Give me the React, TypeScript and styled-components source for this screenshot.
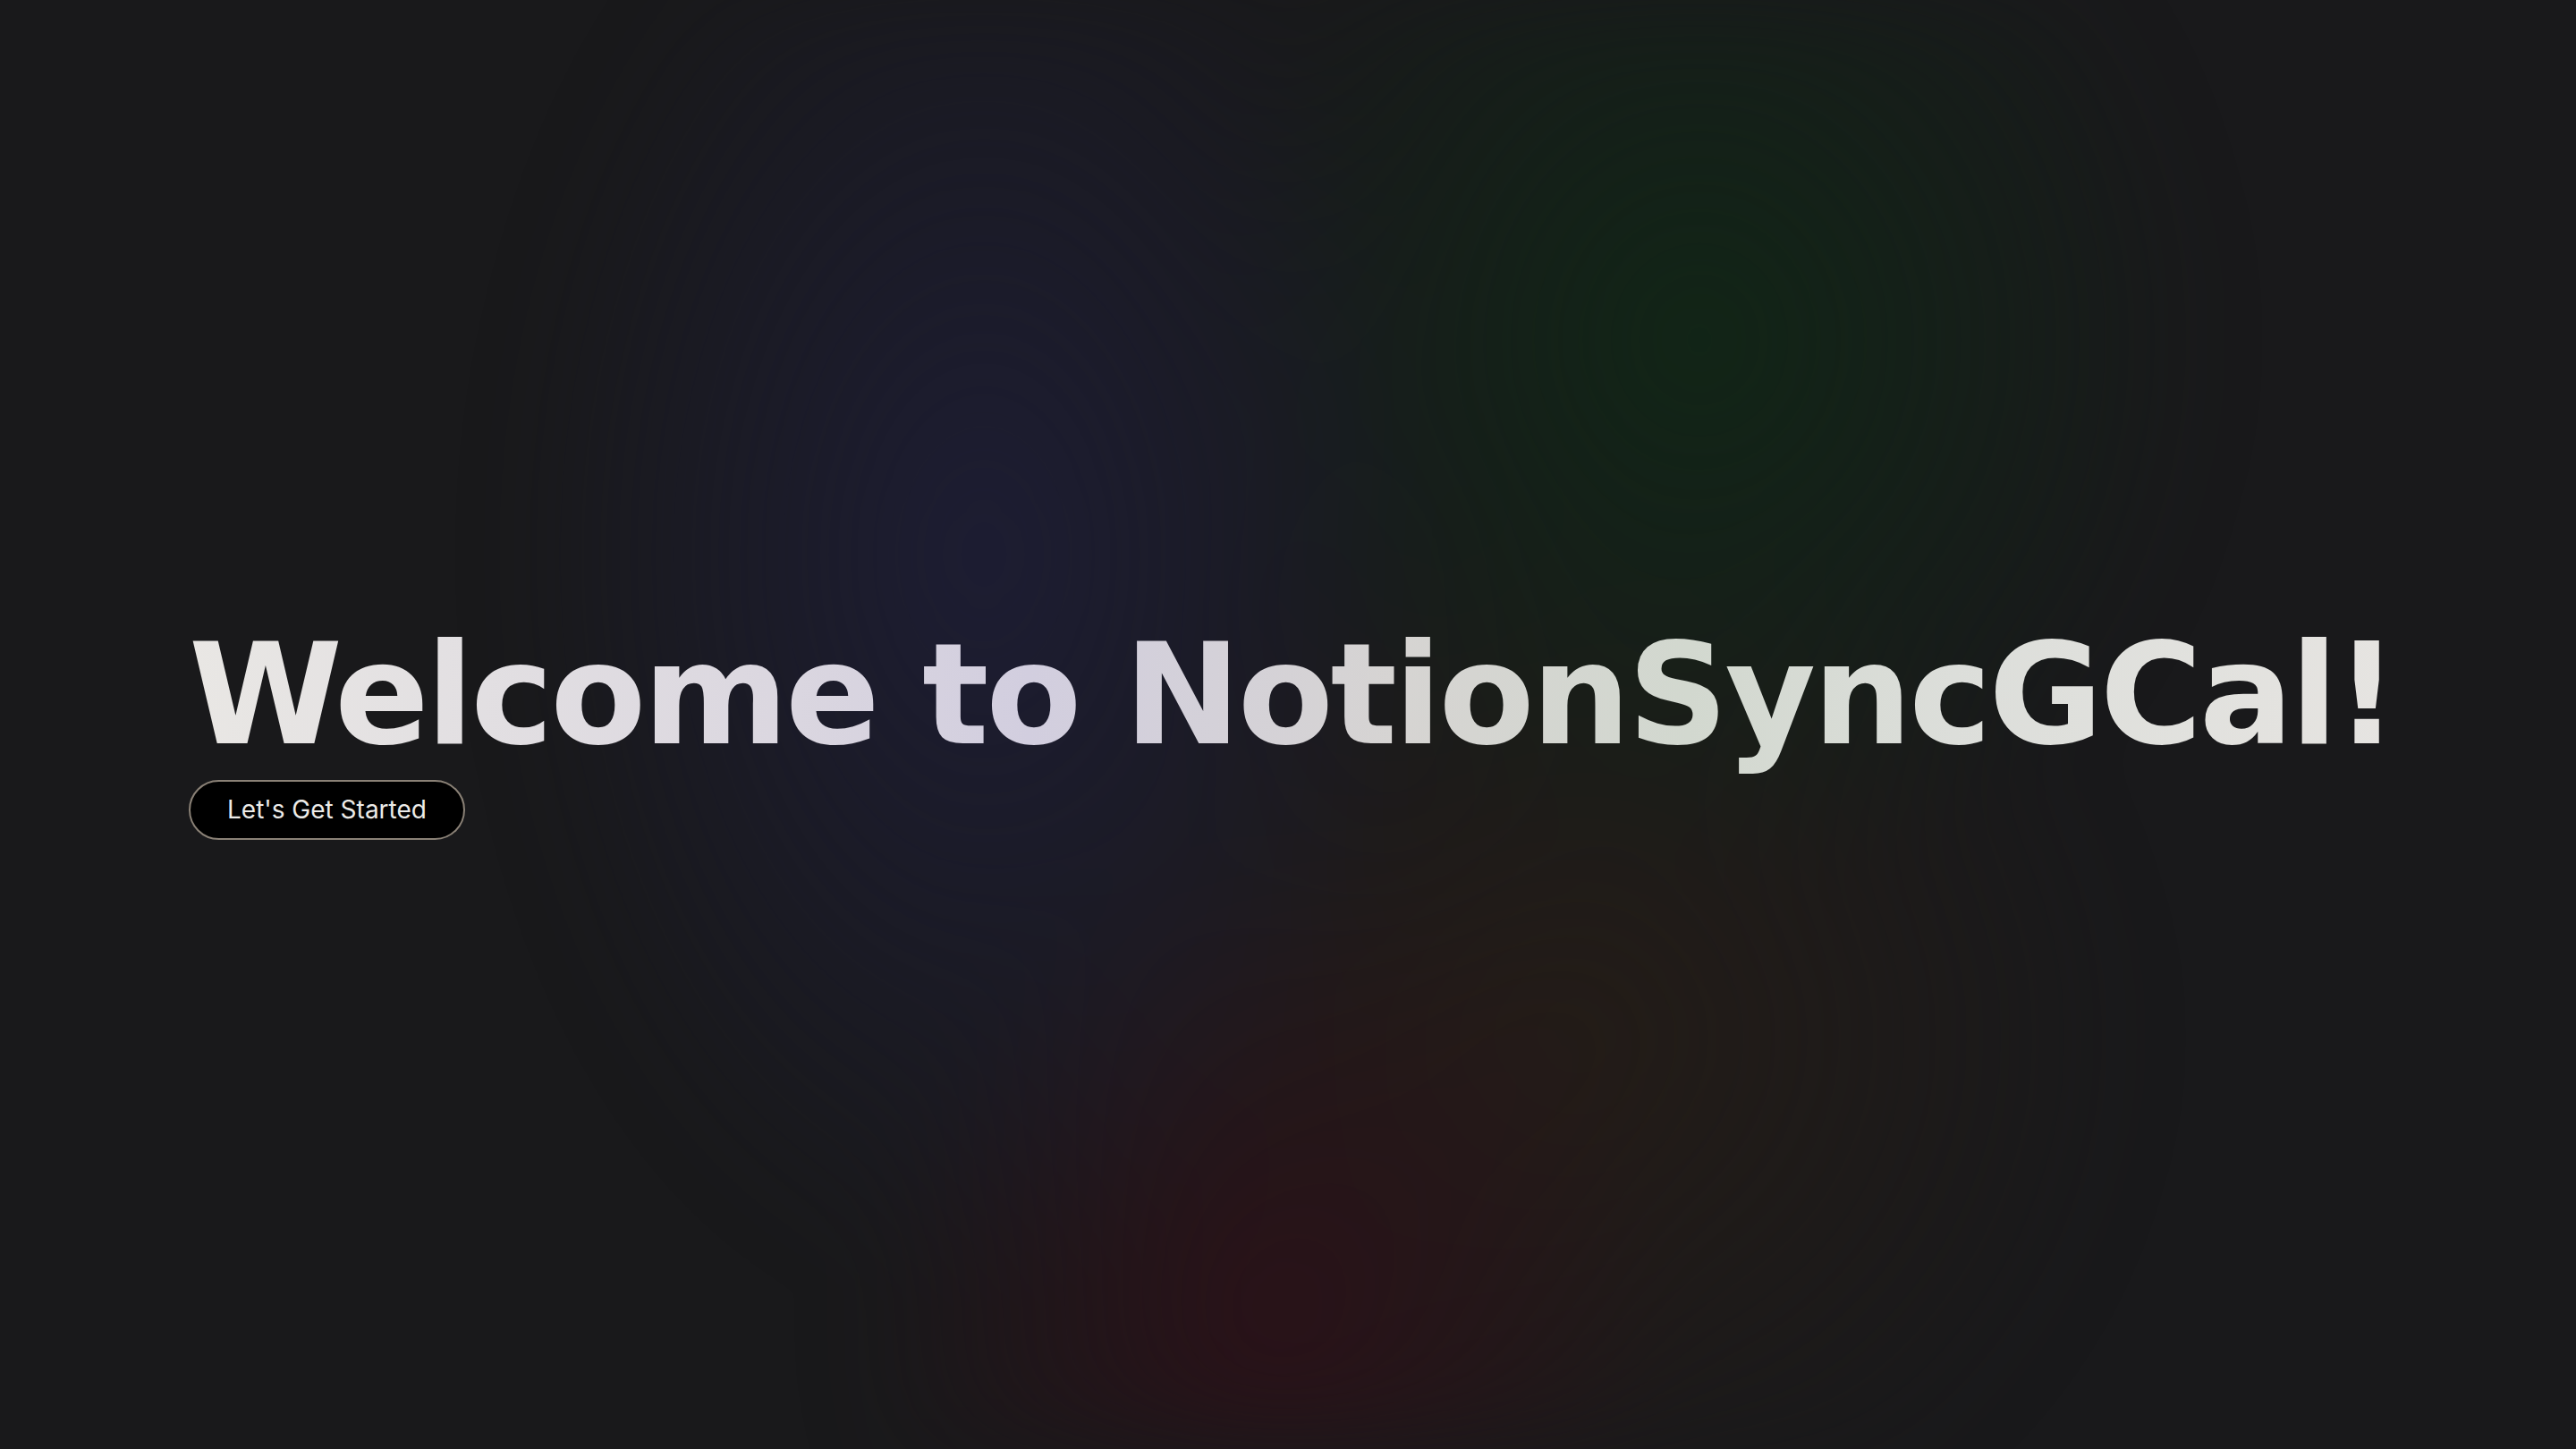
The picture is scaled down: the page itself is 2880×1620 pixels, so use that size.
import React from "react";
import styled, { createGlobalStyle } from "styled-components";

const Global = createGlobalStyle`
  html, body { margin: 0; padding: 0; background: #19191b; }
  body { font-family: "Inter", "Liberation Sans", sans-serif; }
  * { box-sizing: border-box; }
`;

const Page = styled.main`
  position: relative;
  width: 100vw;
  height: 100vh;
  overflow: hidden;
  background: #19191b;
  display: flex;
  flex-direction: column;
  justify-content: center;
  align-items: flex-start;
  padding: 0 0 0 211px;
`;

const Glow = styled.div`
  position: absolute;
  inset: 0;
  pointer-events: none;
  background:
    radial-gradient(ellipse 520px 820px at 1100px 620px, rgba(30, 30, 56, 0.85), rgba(30, 30, 56, 0) 100%),
    radial-gradient(ellipse 560px 620px at 1900px 380px, rgba(16, 40, 22, 0.85), rgba(16, 40, 22, 0) 100%),
    radial-gradient(ellipse 460px 520px at 1420px 1480px, rgba(46, 16, 24, 0.8), rgba(46, 16, 24, 0) 100%),
    radial-gradient(ellipse 620px 600px at 1760px 1160px, rgba(40, 30, 22, 0.7), rgba(40, 30, 22, 0) 100%);
  filter: blur(50px);
`;

const Content = styled.div`
  position: relative;
  display: flex;
  flex-direction: column;
  align-items: flex-start;
  gap: 5px;
  margin-top: 7px;
`;

const Title = styled.h1`
  margin: 0;
  font-family: "DejaVu Sans", "Liberation Sans", sans-serif;
  font-weight: 700;
  font-size: 156px;
  line-height: 1.15;
  letter-spacing: -3.5px;
  white-space: nowrap;
  background: linear-gradient(
    90deg,
    #e9e7e4 0%,
    #dcd8e0 25%,
    #d2cedf 38%,
    #d6d4d2 55%,
    #d2d8cf 68%,
    #dcdeda 80%,
    #e6e4e1 100%
  );
  -webkit-background-clip: text;
  background-clip: text;
  color: transparent;
`;

const StartButton = styled.button`
  font-family: "Inter", "Liberation Sans", sans-serif;
  font-size: 28px;
  font-weight: 400;
  line-height: 34px;
  color: #ecebe8;
  background: #000;
  border: 2px solid #8a8176;
  border-radius: 9999px;
  padding: 14px 41px 15px;
  cursor: pointer;
`;

export default function App() {
  return (
    <>
      <Global />
      <Page>
        <Glow />
        <Content>
          <Title>Welcome to NotionSyncGCal!</Title>
          <StartButton>Let's Get Started</StartButton>
        </Content>
      </Page>
    </>
  );
}
